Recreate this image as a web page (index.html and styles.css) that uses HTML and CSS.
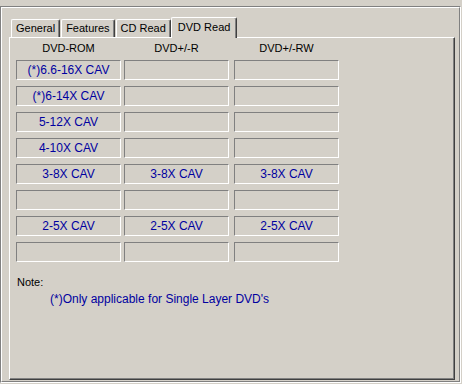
FILE: index.html
```html
<!DOCTYPE html>
<html>
  <head>
    <meta name="viewport" content="width=device-width, initial-scale=1.0" />
    <link rel="stylesheet" href="styles.css">
  </head>

  <body>
    <!--etched frame round the whole property page-->
    <div class="frame">
      <div class="frame-inner">
        <div class="tabs">
          <div class="tab">General</div>
          <div class="tab">Features</div>
          <div class="tab">CD Read</div>
          <div class="tab tab-active">DVD Read</div>
        </div>

        <div class="panel">
          <div class="speed-grid">
            <div class="col-head">DVD-ROM</div>
            <div class="col-head">DVD+/-R</div>
            <div class="col-head">DVD+/-RW</div>

            <div class="speed-box">(*)6.6-16X CAV</div>
            <div class="speed-box"></div>
            <div class="speed-box"></div>

            <div class="speed-box">(*)6-14X CAV</div>
            <div class="speed-box"></div>
            <div class="speed-box"></div>

            <div class="speed-box">5-12X CAV</div>
            <div class="speed-box"></div>
            <div class="speed-box"></div>

            <div class="speed-box">4-10X CAV</div>
            <div class="speed-box"></div>
            <div class="speed-box"></div>

            <div class="speed-box">3-8X CAV</div>
            <div class="speed-box">3-8X CAV</div>
            <div class="speed-box">3-8X CAV</div>

            <div class="speed-box"></div>
            <div class="speed-box"></div>
            <div class="speed-box"></div>

            <div class="speed-box">2-5X CAV</div>
            <div class="speed-box">2-5X CAV</div>
            <div class="speed-box">2-5X CAV</div>

            <div class="speed-box"></div>
            <div class="speed-box"></div>
            <div class="speed-box"></div>
          </div>

          <div class="note">
            <div class="note-label">Note:</div>
            <div class="note-text">(*)Only applicable for Single Layer DVD's</div>
          </div>
        </div>
      </div>
    </div>
  </body>
</html>
```

FILE: styles.css
```css
body {
  margin: 0;
  background-color: #d4d0c8;
  font-family: "Liberation Sans", Arial, sans-serif;
  font-size: 11px;
  color: #000;
}

/*etched border: gray outside, white inside*/
.frame {
  margin-top: 6px;
  width: 461px;
  height: 377px;
  box-sizing: border-box;
  border: 1px solid #fff;
  border-color: #808080 #fff #fff #808080;
}

.frame-inner {
  height: 100%;
  box-sizing: border-box;
  border: 1px solid #808080;
  border-color: #fff #808080 #808080 #fff;
  padding: 9px 4px 1px 7px;
  display: flex;
  flex-direction: column;
}

/*tab strip*/
.tabs {
  display: flex;
  align-items: flex-end;
  gap: 1px;
  height: 20px;
  padding-left: 2px;
}

.tab {
  height: 18px;
  line-height: 17px;
  box-sizing: border-box;
  padding: 0 4px;
  border-top: 1px solid #fff;
  border-left: 1px solid #fff;
  border-right: 1px solid #404040;
  box-shadow: inset -1px 0 #808080;
  border-radius: 2px 2px 0 0;
  white-space: nowrap;
}

/*selected tab sticks out and covers the panel edge*/
.tab-active {
  position: relative;
  z-index: 1;
  height: 21px;
  line-height: 18px;
  margin: 0 -2px -1px -1px;
  padding: 0 6px;
  background-color: #d4d0c8;
}

.panel {
  flex: 1;
  box-sizing: border-box;
  border: 1px solid #fff;
  border-color: #fff #404040 #404040 #fff;
  box-shadow: inset -1px -1px #808080;
  padding: 2px 0 0 6px;
}

.speed-grid {
  display: grid;
  grid-template-columns: 108px 110px 105px;
  grid-template-rows: 14px repeat(8, 20px);
  row-gap: 6px;
}

.col-head {
  width: 105px;
  line-height: 16px;
  text-align: center;
}

.speed-box {
  width: 105px;
  box-sizing: border-box;
  border: 1px solid #fff;
  border-color: #808080 #fff #fff #808080;
  color: #0000a0;
  font-size: 12px;
  line-height: 18px;
  text-align: center;
}

.note {
  margin-top: 12px;
  padding-left: 1px;
  line-height: 17px;
}

.note-text {
  padding-left: 33px;
  color: #0000a0;
  font-size: 12px;
}
```
